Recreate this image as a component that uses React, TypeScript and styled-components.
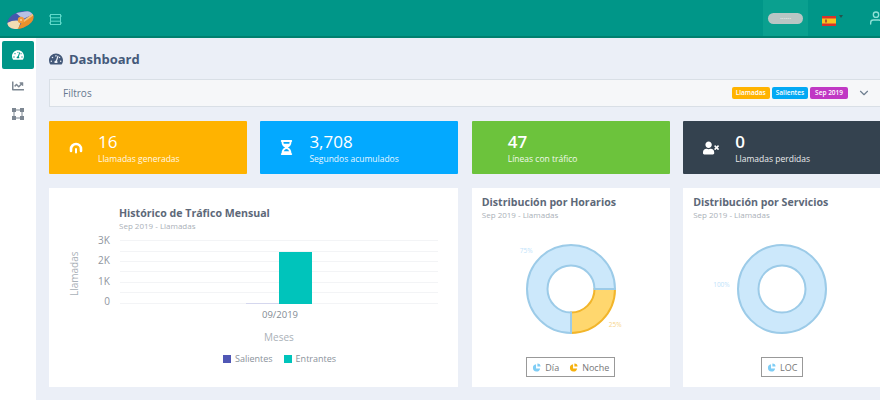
import React from 'react';
import styled, {createGlobalStyle} from 'styled-components';
import {FaChartLine, FaHourglassHalf, FaTachometerAlt, FaUserTimes} from 'react-icons/fa';
import {FiChevronDown, FiUser} from 'react-icons/fi';

const GlobalStyle = createGlobalStyle`
  html, body {
    margin: 0;
    width: 880px;
    height: 400px;
    overflow: hidden;
    background: #ebeff7;
    font-family: "Open Sans", "Liberation Sans", sans-serif;
  }
`;

const Logo = () => (
    <svg width="27" height="20" viewBox="0 0 27 20">
        <clipPath id="logo-lens">
            <ellipse cx="13.5" cy="10" rx="13.6" ry="8.2" transform="rotate(-20 13.5 10)"/>
        </clipPath>
        <g clipPath="url(#logo-lens)">
            <rect width="27" height="20" fill="#4658ad"/>
            <path d="M9 3 L27 0 V4 L16 9Z" fill="#b7c1e4"/>
            <path d="M0 13 C5 10 10 10 14 11 L11 20 H0Z" fill="#f3dcb4"/>
            <path d="M15 12 L27 3 V12 L14 20 H10Z" fill="#e8912c"/>
            <path d="M15 11 L27 3 V5 L17 12Z" fill="#f3c27a"/>
        </g>
        <circle cx="14" cy="10" r="3.2" fill="#ee9a3c"/>
        <circle cx="14" cy="10" r="1" fill="#f6d3a3"/>
    </svg>
);

const ServerIcon = () => (
    <svg width="13" height="11" viewBox="0 0 13 11" fill="none" stroke="#5fd9ca" strokeWidth="1">
        <rect x="1.5" y="0.5" width="10" height="10"/>
        <path d="M1.5 3.8h10M1.5 7.2h10M0 2h1.5M11.5 2H13M0 9h1.5M11.5 9H13"/>
    </svg>
);

const NetworkIcon = () => (
    <svg width="12" height="12" viewBox="0 0 12 12" fill="none" stroke="#7d8792" strokeWidth="1">
        <rect x="2" y="2" width="8" height="8"/>
        <rect x="0.5" y="0.5" width="3" height="3" fill="#7d8792"/>
        <rect x="8.5" y="0.5" width="3" height="3" fill="#7d8792"/>
        <rect x="0.5" y="8.5" width="3" height="3" fill="#7d8792"/>
        <rect x="8.5" y="8.5" width="3" height="3" fill="#7d8792"/>
    </svg>
);

const FlagIcon = () => (
    <svg width="14" height="10" viewBox="0 0 14 10">
        <rect width="14" height="10" fill="#d8332b"/>
        <rect y="2.5" width="14" height="5" fill="#f5c51f"/>
        <rect x="3" y="3.5" width="2" height="3" fill="#b5572a"/>
    </svg>
);

const PhoneIcon = () => (
    <svg width="14" height="12" viewBox="0 0 14 12" fill="none" stroke="#fff" strokeLinecap="round">
        <path d="M2 9 V7 A5 5 0 0 1 12 7 V9" strokeWidth="2.6"/>
        <path d="M7 7v3.5" strokeWidth="2"/>
    </svg>
);

const PieDot = ({color}: {color: string}) => (
    <svg width="9" height="9" viewBox="0 0 10 10">
        <path d="M4.5 1.5 A4 4 0 1 0 9 6 L4.5 6Z" fill={color}/>
        <path d="M6 0.5 A3.5 3.5 0 0 1 9.5 4 L6 4Z" fill={color}/>
    </svg>
);

interface DonutProps {
    parts: {value: number; fill: string; stroke: string}[];
}

// ring segments, angles start at 12 o'clock
const Donut: React.FC<DonutProps> = ({parts}) => {
    const cx = 45, cy = 45, outer = 44, inner = 23.5;
    const point = (r: number, a: number) => {
        const rad = (a - 90) * Math.PI / 180;
        return `${cx + r * Math.cos(rad)} ${cy + r * Math.sin(rad)}`;
    };
    let start = 90;
    return (
        <svg width="90" height="90" viewBox="0 0 90 90">
            {parts.map((part, i) => {
                if (part.value >= 100) {
                    return (
                        <path key={i} fillRule="evenodd" fill={part.fill} stroke={part.stroke} strokeWidth="2"
                              d={`M${cx - outer} ${cy}a${outer} ${outer} 0 1 0 ${outer * 2} 0a${outer} ${outer} 0 1 0 ${-outer * 2} 0Z
                                  M${cx - inner} ${cy}a${inner} ${inner} 0 1 0 ${inner * 2} 0a${inner} ${inner} 0 1 0 ${-inner * 2} 0Z`}/>
                    );
                }
                const end = start + part.value * 3.6;
                const large = part.value > 50 ? 1 : 0;
                const d = `M${point(outer, start)} A${outer} ${outer} 0 ${large} 1 ${point(outer, end)}
                           L${point(inner, end)} A${inner} ${inner} 0 ${large} 0 ${point(inner, start)}Z`;
                start = end;
                return <path key={i} d={d} fill={part.fill} stroke={part.stroke} strokeWidth="2"/>;
            })}
        </svg>
    );
};

const App: React.FC = () => (
    <>
        <GlobalStyle/>
        <Page>
            <TopBar>
                <LogoSlot><Logo/></LogoSlot>
                <ServerSlot><ServerIcon/></ServerSlot>
                <TopRight>
                    <UserSlot><UserPill>······</UserPill></UserSlot>
                    <FlagSlot><FlagIcon/><Caret/></FlagSlot>
                    <UserIconSlot><FiUser size={16}/></UserIconSlot>
                </TopRight>
            </TopBar>
            <Body>
                <SideBar>
                    <SideItem $active><FaTachometerAlt size={12}/></SideItem>
                    <SideItem><FaChartLine size={12}/></SideItem>
                    <SideItem><NetworkIcon/></SideItem>
                </SideBar>
                <Main>
                    <PageTitle><FaTachometerAlt size={14}/>Dashboard</PageTitle>
                    <FilterBar>
                        <FilterLabel>Filtros</FilterLabel>
                        <Tag $color="#ffb300">Llamadas</Tag>
                        <Tag $color="#03a9f4">Salientes</Tag>
                        <Tag $color="#c038c4" $pad={5}>Sep 2019</Tag>
                        <FilterCaret><FiChevronDown size={14}/></FilterCaret>
                    </FilterBar>
                    <Grid>
                        <StatCard $color="#ffb300">
                            <StatIcon><PhoneIcon/></StatIcon>
                            <div><StatValue>16</StatValue><StatLabel>Llamadas generadas</StatLabel></div>
                        </StatCard>
                        <StatCard $color="#03a9ff">
                            <StatIcon><FaHourglassHalf size={15}/></StatIcon>
                            <div><StatValue>3,708</StatValue><StatLabel>Segundos acumulados</StatLabel></div>
                        </StatCard>
                        <StatCard $color="#6cc33c">
                            <StatIcon $width={36}/>
                            <div><StatValue $bold>47</StatValue><StatLabel>Líneas con tráfico</StatLabel></div>
                        </StatCard>
                        <StatCard $color="#34424f">
                            <StatIcon $width={52}><FaUserTimes size={16}/></StatIcon>
                            <div><StatValue $bold>0</StatValue><StatLabel>Llamadas perdidas</StatLabel></div>
                        </StatCard>

                        <WideCard>
                            <BarHeader>
                                <CardTitle>Histórico de Tráfico Mensual</CardTitle>
                                <CardSub>Sep 2019 - Llamadas</CardSub>
                            </BarHeader>
                            <ChartRow>
                                <YTitle>Llamadas</YTitle>
                                <YTicks>
                                    <span>3K</span><span>2K</span><span>1K</span><span>0</span>
                                </YTicks>
                                <Plot>
                                    <SmallBar/>
                                    <TealBar/>
                                </Plot>
                            </ChartRow>
                            <XTick>09/2019</XTick>
                            <XTitle>Meses</XTitle>
                            <BarLegend>
                                <Swatch $color="#5057b5"/>Salientes
                                <Swatch $color="#00c4bb"/>Entrantes
                            </BarLegend>
                        </WideCard>

                        <Card>
                            <CardTitle>Distribución por Horarios</CardTitle>
                            <CardSub>Sep 2019 - Llamadas</CardSub>
                            <DonutWrap>
                                <Donut parts={[
                                    {value: 25, fill: '#ffd76e', stroke: '#f2b52a'},
                                    {value: 75, fill: '#cce8fb', stroke: '#9ccbe8'},
                                ]}/>
                                <PctLabel $color="#bfe3fa" $left="-6px" $top="2px">75%</PctLabel>
                                <PctLabel $color="#f7d488" $left="83px" $top="76px">25%</PctLabel>
                            </DonutWrap>
                            <PieLegend>
                                <PieDot color="#7fcdf5"/><span>Día</span>
                                <PieDot color="#f5b10f"/><span>Noche</span>
                            </PieLegend>
                        </Card>

                        <Card>
                            <CardTitle>Distribución por Servicios</CardTitle>
                            <CardSub>Sep 2019 - Llamadas</CardSub>
                            <DonutWrap>
                                <Donut parts={[{value: 100, fill: '#cce8fb', stroke: '#9ccbe8'}]}/>
                                <PctLabel $color="#bfe3fa" $left="-24px" $top="36px">100%</PctLabel>
                            </DonutWrap>
                            <PieLegend>
                                <PieDot color="#7fcdf5"/><span>LOC</span>
                            </PieLegend>
                        </Card>
                    </Grid>
                </Main>
            </Body>
        </Page>
    </>
);

const Page = styled.div`
  width: 880px;
  height: 400px;
  overflow: hidden;
  display: flex;
  flex-direction: column;
`;

const TopBar = styled.header`
  height: 38px;
  box-sizing: border-box;
  flex: none;
  display: flex;
  align-items: center;
  background: #009688;
  border-bottom: 2px solid #00806f;
`;

const LogoSlot = styled.div`
  width: 49px;
  margin-top: 4px;
  padding-left: 7px;
  box-sizing: border-box;
  display: flex;
`;

const ServerSlot = styled.div`
  margin-top: 2px;
  display: flex;
`;

const TopRight = styled.div`
  margin-left: auto;
  height: 100%;
  display: flex;
  align-items: center;
`;

const UserSlot = styled.div`
  width: 45px;
  height: 100%;
  display: flex;
  align-items: center;
  justify-content: center;
  background: #0aa08f;
`;

const UserPill = styled.div`
  width: 35px;
  height: 11px;
  border-radius: 6px;
  background: #b9c6c4;
  color: #fff;
  font-size: 7px;
  line-height: 11px;
  text-align: center;
  overflow: hidden;
`;

const FlagSlot = styled.div`
  width: 60px;
  margin-top: 5px;
  padding-left: 14px;
  box-sizing: border-box;
  display: flex;
  align-items: flex-start;
  gap: 3px;
`;

const Caret = styled.span`
  width: 0;
  height: 0;
  margin-top: -1px;
  border-left: 2px solid transparent;
  border-right: 2px solid transparent;
  border-top: 3px solid #26524c;
`;

const UserIconSlot = styled.div`
  width: 12px;
  color: #8fe0d6;
  display: flex;

  svg {
    flex: none;
  }
`;

const Body = styled.div`
  flex: 1;
  display: flex;
  min-height: 0;
`;

const SideBar = styled.nav`
  width: 36px;
  flex: none;
  padding-top: 3px;
  box-sizing: border-box;
  background: #fff;
  display: flex;
  flex-direction: column;
  align-items: center;
`;

const SideItem = styled.div<{$active?: boolean}>`
  width: 32px;
  height: 28px;
  margin-bottom: ${p => (p.$active ? '3px' : '0')};
  border-radius: 2px;
  display: flex;
  align-items: center;
  justify-content: center;
  background: ${p => (p.$active ? '#009688' : 'transparent')};
  color: ${p => (p.$active ? '#fff' : '#7d8792')};
`;

const Main = styled.main`
  flex: 1;
  min-width: 0;
  padding: 0 0 0 13px;
`;

const PageTitle = styled.h1`
  margin: 0;
  height: 41px;
  display: flex;
  align-items: center;
  gap: 6px;
  font-size: 13px;
  font-weight: 700;
  color: #44597a;
`;

const FilterBar = styled.div`
  width: 833px;
  height: 28px;
  display: flex;
  align-items: center;
  gap: 2px;
  background: #f6f7f9;
  border: 1px solid #d9dfe6;
  box-sizing: border-box;
`;

const FilterLabel = styled.span`
  margin-left: 13px;
  margin-right: auto;
  font-size: 10px;
  color: #66788f;
`;

const Tag = styled.span<{$color: string; $pad?: number}>`
  height: 12px;
  padding: 0 ${p => p.$pad ?? 4}px;
  border-radius: 2px;
  background: ${p => p.$color};
  color: #fff;
  font-size: 6.5px;
  font-weight: 600;
  line-height: 12px;
`;

const FilterCaret = styled.span`
  width: 31px;
  padding-left: 7px;
  box-sizing: border-box;
  display: flex;
  color: #6f7f90;
`;

const Grid = styled.div`
  margin-top: 14px;
  display: grid;
  grid-template-columns: repeat(4, 198px);
  grid-template-rows: 53px 199px;
  column-gap: 13.4px;
  row-gap: 14px;
`;

const StatCard = styled.div<{$color: string}>`
  display: flex;
  align-items: center;
  background: ${p => p.$color};
  color: #fff;
  border-radius: 1px;
`;

const StatIcon = styled.div<{$width?: number}>`
  width: ${p => p.$width ?? 49}px;
  padding-left: 4px;
  box-sizing: border-box;
  display: flex;
  justify-content: center;
`;

const StatValue = styled.div<{$bold?: boolean}>`
  font-size: 17px;
  font-weight: ${p => (p.$bold ? 600 : 500)};
  line-height: 19px;
`;

const StatLabel = styled.div`
  margin-top: 2px;
  font-size: 8.5px;
  line-height: 11px;
  opacity: 0.9;
`;

const Card = styled.section`
  padding: 7px 10px 0;
  box-sizing: border-box;
  background: #fff;
  display: flex;
  flex-direction: column;
`;

const WideCard = styled(Card)`
  grid-column: span 2;
  padding: 17.5px 20px 0;
  align-items: stretch;
`;

const BarHeader = styled.div`
  margin-left: 50px;
`;

const CardTitle = styled.div`
  font-size: 10.6px;
  font-weight: 700;
  line-height: 15px;
  color: #5d6878;
  white-space: nowrap;
`;

const CardSub = styled.div`
  font-size: 8px;
  line-height: 10px;
  color: #aab1b8;
`;

const ChartRow = styled.div`
  margin-top: 3px;
  height: 74px;
  display: flex;
  align-items: stretch;
`;

const YTitle = styled.div`
  width: 11px;
  height: 60px;
  font-size: 10px;
  color: #aab1b8;
  writing-mode: vertical-rl;
  transform: rotate(180deg);
  text-align: center;
  line-height: 11px;
  align-self: flex-end;
  margin-bottom: 4px;
`;

const YTicks = styled.div`
  width: 40px;
  padding-right: 10px;
  box-sizing: border-box;
  display: flex;
  flex-direction: column;
  justify-content: space-between;
  align-items: flex-end;
  font-size: 10px;
  line-height: 12px;
  color: #8f969e;
`;

const Plot = styled.div`
  width: 320px;
  height: 64px;
  margin-top: 6px;
  display: flex;
  justify-content: center;
  align-items: flex-end;
  background-image: repeating-linear-gradient(to bottom, #f3f4f6 0 1px, transparent 1px 10.5px);
`;

const SmallBar = styled.div`
  width: 33px;
  height: 1px;
  background: #d5d7ee;
`;

const TealBar = styled.div`
  width: 33px;
  height: 52px;
  background: #00c4bb;
`;

const XTick = styled.div`
  margin-left: 171px;
  width: 80px;
  text-align: center;
  font-size: 9.5px;
  line-height: 14px;
  color: #838b94;
`;

const XTitle = styled.div`
  margin: 8px 0 0 170px;
  width: 80px;
  text-align: center;
  font-size: 10px;
  line-height: 14px;
  color: #aab1b8;
`;

const BarLegend = styled.div`
  margin: 9px 0 0 147px;
  display: flex;
  align-items: center;
  gap: 4px;
  font-size: 9px;
  line-height: 12px;
  color: #8a929b;
`;

const Swatch = styled.span<{$color: string}>`
  width: 8px;
  height: 8px;
  margin-left: 7px;
  background: ${p => p.$color};
`;

const DonutWrap = styled.div`
  position: relative;
  width: 90px;
  margin: 24px auto 0;
  height: 90px;
`;

const PctLabel = styled.span<{$color: string; $left: string; $top: string}>`
  position: absolute;
  left: ${p => p.$left};
  top: ${p => p.$top};
  font-size: 6.5px;
  color: ${p => p.$color};
`;

const PieLegend = styled.div`
  align-self: center;
  margin-top: 23px;
  height: 20px;
  padding: 0 5px;
  box-sizing: border-box;
  border: 1px solid #999;
  display: flex;
  align-items: center;
  gap: 4px;
  font-size: 9px;
  color: #777;

  span + svg {
    margin-left: 6px;
  }
`;

export default App;
